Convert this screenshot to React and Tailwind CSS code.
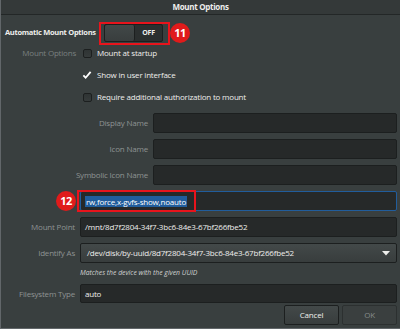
import React from "react";

function Entry({ children, focused }) {
  return (
    <div
      className={
        "h-[20px] flex-1 rounded-[2px] border flex items-center pl-[4px] text-[8px] text-[#eeeeec] " +
        (focused ? "border-[#215d9c] bg-[#262929]" : "border-[#1c1f1f] bg-[#262929]")
      }
    >
      {children}
    </div>
  );
}

function Row({ label, labelW, children, dim }) {
  return (
    <div className="flex items-center gap-[5px] pr-[3px]">
      <div
        className={
          "shrink-0 text-right text-[8px] " + (dim ? "text-[#7a8080]" : "text-[#8e9393]")
        }
        style={{ width: labelW }}
      >
        {label}
      </div>
      {children}
    </div>
  );
}

function CheckRow({ label, checked, children }) {
  return (
    <div className="h-[22px] flex items-center">
      <div className="w-[75px] shrink-0 text-right text-[8px] text-[#7a8080]">{label}</div>
      <div className="ml-[6px] w-[10px] h-[10px] flex items-center justify-center">
        {checked ? (
          <svg width="11" height="10" viewBox="0 0 11 10">
            <path d="M1.5 5.5 L4 8 L9.5 1.5" fill="none" stroke="#ffffff" strokeWidth="2" />
          </svg>
        ) : (
          <div className="w-[9px] h-[9px] rounded-[2px] border border-[#1c1f1f] bg-gradient-to-b from-[#2f3434] to-[#363b3b]" />
        )}
      </div>
      <div className="ml-[5px] text-[8px] text-[#eeeeec]">{children}</div>
    </div>
  );
}

export default function App() {
  return (
    <div className="relative w-[400px] h-[329px] overflow-hidden bg-[#393f3f] border-l border-b border-[#62676a] flex flex-col font-['Open_Sans',sans-serif] tracking-[-0.2px] text-[#eeeeec]">
      <div className="h-[15px] shrink-0 border-b border-[#232727] bg-[#343939] flex items-center justify-center text-[8px] font-bold tracking-[-0.3px]">
        Mount Options
      </div>

      <div className="mt-[9px] h-[18px] flex items-center pl-[4px]">
        <div className="w-[99px] shrink-0 text-[7.5px] font-bold tracking-[-0.3px]">Automatic Mount Options</div>
        <div className="w-[59px] h-[18px] rounded-[2px] border border-[#1c1f1f] bg-[#2b2f2f] flex">
          <div className="w-[30px] h-full rounded-[2px] border-r border-[#1c1f1f] bg-gradient-to-b from-[#424848] to-[#393e3e]" />
          <div className="flex-1 flex items-center justify-center text-[7px] font-bold text-[#eeeeec]">OFF</div>
        </div>
      </div>

      <CheckRow label="Mount Options">Mount at startup</CheckRow>
      <CheckRow checked>Show in user interface</CheckRow>
      <CheckRow>Require additional authorization to mount</CheckRow>

      <div className="mt-[5px] flex flex-col gap-[6px]">
        <Row label="Display Name" labelW="147px">
          <Entry />
        </Row>
        <Row label="Icon Name" labelW="147px">
          <Entry />
        </Row>
        <Row label="Symbolic Icon Name" labelW="147px">
          <Entry />
        </Row>
        <Row label="" labelW="74px">
          <Entry focused>
            <span className="bg-[#215d9c] text-white leading-[11px] px-[1px]">rw,force,x-gvfs-show,noauto</span>
          </Entry>
        </Row>
        <Row label="Mount Point" labelW="74px">
          <Entry>/mnt/8d7f2804-34f7-3bc6-84e3-67bf266fbe52</Entry>
        </Row>
        <Row label="Identify As" labelW="74px">
          <div className="h-[20px] flex-1 rounded-[2px] border border-[#1c1f1f] bg-gradient-to-b from-[#434949] to-[#383d3d] flex items-center pl-[6px] pr-[6px] text-[8px]">
            <span className="flex-1">/dev/disk/by-uuid/8d7f2804-34f7-3bc6-84e3-67bf266fbe52</span>
            <svg width="8" height="5" viewBox="0 0 8 5">
              <path d="M0 0 H8 L4 4.5 Z" fill="#eeeeec" />
            </svg>
          </div>
        </Row>
      </div>

      <div className="h-[20px] flex items-center pl-[79px] text-[6.8px] italic text-[#d0d2d2] tracking-[0px]">
        Matches the device with the given UUID
      </div>

      <div className="mt-[1px] flex flex-col">
        <Row label="Filesystem Type" labelW="74px">
          <div className="h-[19px] flex-1 rounded-[2px] border border-[#1c1f1f] bg-[#262929] flex items-center pl-[4px] text-[8px]">auto</div>
        </Row>
      </div>

      <div className="mt-[2px] flex justify-end gap-[3px] pr-[3px]">
        <div className="w-[55px] h-[20px] rounded-[2px] border border-[#1c1f1f] bg-gradient-to-b from-[#434949] to-[#383d3d] flex items-center justify-center text-[8px]">
          Cancel
        </div>
        <div className="w-[55px] h-[20px] rounded-[2px] border border-[#2c3030] bg-[#3a3f3f] flex items-center justify-center text-[8px] text-[#858a8a]">
          OK
        </div>
      </div>

      {/* annotations */}
      <div className="absolute left-[98px] top-[22px] w-[71px] h-[23px] border-2 border-[#e8141c]" />
      <div className="absolute left-[169px] top-[23px] w-[20px] h-[20px] rounded-full bg-[#e01b1b] flex items-center justify-center text-[11px] font-bold text-white tracking-[-0.5px]">
        11
      </div>
      <div className="absolute left-[76px] top-[190px] w-[119px] h-[22px] border-2 border-[#e8141c]" />
      <div className="absolute left-[55px] top-[191px] w-[20px] h-[20px] rounded-full bg-[#e01b1b] flex items-center justify-center text-[11px] font-bold text-white tracking-[-0.5px]">
        12
      </div>
    </div>
  );
}
